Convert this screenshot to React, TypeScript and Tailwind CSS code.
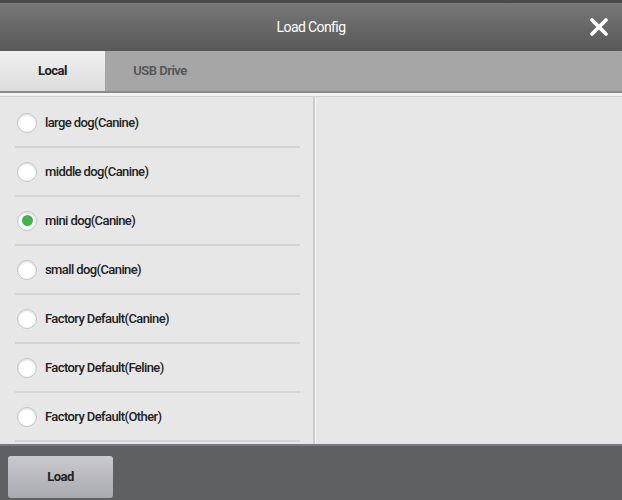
import { X } from "lucide-react";

const configs = [
    "large dog(Canine)",
    "middle dog(Canine)",
    "mini dog(Canine)",
    "small dog(Canine)",
    "Factory Default(Canine)",
    "Factory Default(Feline)",
    "Factory Default(Other)",
];

const font = { fontFamily: '"Roboto", "Liberation Sans", sans-serif' };

function Radio({ checked }: { checked: boolean }) {
    return (
        <span className="flex items-center justify-center w-[20px] h-[20px] rounded-full bg-white border border-[#c4c4c4] shadow-[inset_0_1px_2px_rgba(0,0,0,0.15)]">
            {checked && <span className="w-[11px] h-[11px] rounded-full bg-[#46b34a]" />}
        </span>
    );
}

export default function App() {
    return (
        <div className="w-[622px] h-[500px] flex flex-col bg-[#e7e7e7] overflow-hidden" style={font}>
            <div className="h-[3px] bg-[#4a4a48]" />
            <header className="relative h-[48px] flex items-center justify-center bg-gradient-to-b from-[#787878] to-[#585858]">
                <h1 className="text-[14px] text-white tracking-[-0.6px]">Load Config</h1>
                <button className="absolute right-[9px] top-[10px] text-white">
                    <X className="w-[28px] h-[28px]" strokeWidth={3.2} />
                </button>
            </header>
            <nav className="h-[42px] flex bg-[#a6a6a6] border-b-[2px] border-[#8a8a8a]">
                <div className="w-[105px] flex items-center justify-center bg-gradient-to-b from-[#f0f0f0] to-[#dcdcdc] text-[13px] font-bold tracking-[-0.5px] text-[#222]">
                    Local
                </div>
                <div className="w-[110px] flex items-center justify-center text-[13px] font-semibold tracking-[-0.5px] text-[#555]">
                    USB Drive
                </div>
            </nav>
            <div className="h-[4px] bg-[#f2f2f2] border-b border-[#d0d0d0]" />
            <main className="flex-1 flex">
                <ul className="w-[315px] pt-[2px] pl-[15px] pr-[13px] border-r-[2px] border-[#cdcdcd]">
                    {configs.map((c, i) => (
                        <li key={c} className="h-[49px] flex items-center gap-[8px] pl-[2px] border-b-[2px] border-[#d4d4d4]">
                            <Radio checked={i === 2} />
                            <span className="text-[13px] font-medium tracking-[-0.6px] text-[#222]">{c}</span>
                        </li>
                    ))}
                </ul>
                <section className="flex-1 border-l border-[#f4f4f4]" />
            </main>
            <footer className="h-[56px] flex items-end pb-[2px] px-[8px] bg-[#5f6064] border-t-[2px] border-[#7a7a7e]">
                <button className="w-[105px] h-[42px] rounded-[3px] bg-gradient-to-b from-[#c9c9cf] to-[#a9a9b0] text-[13px] font-bold tracking-[-0.5px] text-[#222]">
                    Load
                </button>
            </footer>
        </div>
    );
}
